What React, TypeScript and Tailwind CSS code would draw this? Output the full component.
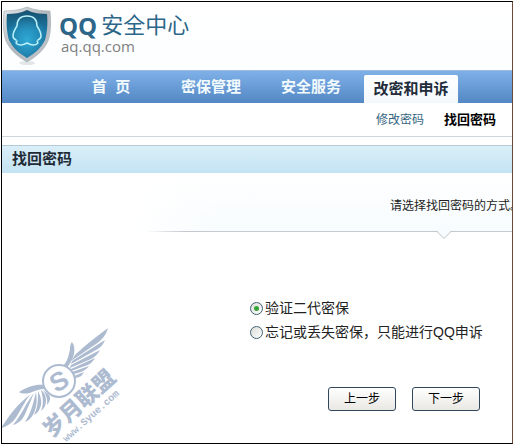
import React, { useState } from "react";

const navItems = [
  { label: "首\u00A0\u00A0页", href: "#home" },
  { label: "密保管理", href: "#manage" },
  { label: "安全服务", href: "#service" },
];

const methods = [
  { id: "mibao", label: "验证二代密保" },
  { id: "appeal", label: "忘记或丢失密保，只能进行QQ申诉" },
];

function ShieldLogo() {
  return (
    <svg width="50" height="62" viewBox="0 0 50 62" aria-hidden="true">
      <defs>
        <linearGradient id="rim" x1="0" y1="0" x2="1" y2="1">
          <stop offset="0" stopColor="#e4e7e9" />
          <stop offset="0.5" stopColor="#b0b6bc" />
          <stop offset="1" stopColor="#c4c9ce" />
        </linearGradient>
        <linearGradient id="face" x1="0" y1="0" x2="0" y2="1">
          <stop offset="0" stopColor="#17506f" />
          <stop offset="0.45" stopColor="#1c7aa6" />
          <stop offset="1" stopColor="#1a6c98" />
        </linearGradient>
        <radialGradient id="glow" cx="0.5" cy="0.62" r="0.5">
          <stop offset="0" stopColor="#2fa9d6" />
          <stop offset="1" stopColor="#2fa9d6" stopOpacity="0" />
        </radialGradient>
      </defs>
      <ellipse cx="25" cy="57" rx="8" ry="2" fill="#e3e6e8" />
      <path d="M25 1C18 4 10 5 2 5c-1 11-1 22 2 30 4 9 11 15 21 21 10-6 17-12 21-21 3-8 3-19 2-30C40 5 32 4 25 1Z" fill="url(#rim)" stroke="#a0a7ae" strokeWidth="0.6" />
      <path d="M25 4C19 7 12 8 5 8c-1 10 0 19 2 26 4 8 10 13 18 18 8-5 14-10 18-18 2-7 3-16 2-26C38 8 31 7 25 4Z" fill="url(#face)" />
      <path d="M25 4C19 7 12 8 5 8c-1 10 0 19 2 26 4 8 10 13 18 18 8-5 14-10 18-18 2-7 3-16 2-26C38 8 31 7 25 4Z" fill="url(#glow)" />
      <g fill="none" stroke="#b9f1fb" strokeWidth="1.5" strokeLinecap="round" strokeLinejoin="round">
        <path d="M14 34c-2-1-3-2-3-4 0-4 2-7 4-10 0-7 4-10 10-10s10 3 10 10c2 3 4 6 4 10 0 2-1 3-3 4" />
        <path d="M15 35c-2 2 0 4 4 4 2 0 4-1 6-2 2 1 4 2 6 2 4 0 6-2 4-4" />
      </g>
    </svg>
  );
}

function WingMark() {
  return (
    <svg width="126" height="120" viewBox="2 325 126 120" className="pointer-events-none absolute bottom-0 left-0" aria-hidden="true">
      <g fill="#adbbd1">
        {/* upper wing */}
        <path d="M62 369c5-4 7-12 8-18 0-4 1-6 2-7 2 3 3 6 2 12-2 7-5 11-8 15z" />
        <path d="M75 357c9-9 21-18 33-27-2 7-6 12-12 16l-25 17z" />
        <path d="M72 363l25-16c3-2 6-4 8-5-2 5-5 8-9 10l-25 14z" />
        <path d="M71 367l29-15c-2 4-5 7-9 9l-21 9z" />
        <path d="M71 371l24-11c-3 5-6 7-10 8l-14 5z" />
        <path d="M72 374l17-6c-3 4-7 6-15 8z" />
        <path d="M74 378l10-4c-2 4-4 5-8 6z" />
        {/* lower wing */}
        <path d="M45 387c-9-1-16 1-26 7 3 2 9 2 13 0 5-2 9-3 12-3z" />
        <path d="M31 396C17 406 10 417 1 430c7-2 12-5 16-12 5-8 9-17 14-22z" />
        <path d="M34 395c-8 10-12 21-21 32 7-2 10-6 13-13z" />
        <path d="M36 394c-3 12-5 21-11 30 5-2 8-6 10-12 2-6 2-12 1-18z" />
        <path d="M38 393c0 9 0 16-4 24 4-2 6-6 7-10 1-5-1-10-3-14z" />
        <path d="M41 392c2 8 3 13 0 21 4-3 5-7 5-11 0-4-2-8-5-10z" />
        <path d="M43 392c3 5 5 9 4 15 3-3 4-7 2-10z" />
      </g>
      <circle cx="59" cy="383" r="16" fill="#ffffff" stroke="#adbbd1" strokeWidth="2" />
      <text x="59" y="392" textAnchor="middle" fontSize="26" transform="rotate(-30 59 383)" className="fill-[#adbbd1] font-['Liberation_Sans',sans-serif] font-bold">
        S
      </text>
      <text x="79" y="413" textAnchor="middle" fontSize="22" transform="rotate(-42 79 405)" className="fill-[#adbbd1] font-['Noto_Sans_CJK_SC',sans-serif] font-black">
        岁月联盟
      </text>
      <text x="91" y="421" textAnchor="middle" fontSize="10" transform="rotate(-42 91 418)" className="fill-[#adbbd1] font-['Liberation_Mono',monospace] font-bold">
        www.Syue.com
      </text>
    </svg>
  );
}

export default function App() {
  const [method, setMethod] = useState("mibao");

  const buttonClass =
    "h-6 w-[68px] rounded-[3px] border border-[#33475a] bg-linear-to-b from-white to-[#e9e8e3] text-xs text-black";

  return (
    <div className="min-h-screen bg-white p-px pb-0.5 font-['Liberation_Sans','Noto_Sans_CJK_SC',sans-serif] text-[#222]">
      <div className="relative flex min-h-[calc(100vh-3px)] flex-col overflow-hidden border border-black border-r-[#6b4a3c]">
        <header className="flex h-[68px] shrink-0 items-start gap-[7px] bg-linear-to-b from-white to-[#fcfeff] pt-1">
          <ShieldLogo />
          <div className="flex flex-col pt-2">
            <div className="flex items-center gap-1 text-[#2c6688]">
              <span className="font-['Open_Sans',sans-serif] text-2xl leading-6 font-bold">QQ</span>
              <span className="text-[22px] leading-6">安全中心</span>
            </div>
            <span className="pl-0.5 font-['Open_Sans',sans-serif] text-[15px] leading-4 text-[#808080]">aq.qq.com</span>
          </div>
        </header>

        <nav className="flex h-[33px] shrink-0 items-end border-t border-[#9dbbdc] bg-linear-to-b from-[#7fb0e8] to-[#5388c4] pl-[59px] text-[15px] font-bold whitespace-nowrap text-[#f2fafd]">
          {navItems.map((item) => (
            <a key={item.label} href={item.href} className="flex h-full w-[100px] items-center justify-center">
              {item.label}
            </a>
          ))}
          <a href="#password" className="ml-[3px] flex h-7 w-[94px] items-center justify-center rounded-t-xs bg-linear-to-b from-white to-[#f3f8fc] text-[#222c3a]">
            改密和申诉
          </a>
        </nav>

        <div className="shrink-0 pb-2">
          <div className="flex h-[34px] items-center gap-5 border-b border-[#d0d7dc] pl-[374px] whitespace-nowrap">
            <a href="#change" className="text-xs text-[#35647f]">修改密码</a>
            <a href="#find" className="text-[13px] font-bold text-black">找回密码</a>
          </div>
        </div>

        <h1 className="flex h-7 shrink-0 items-center border-t border-[#b5cbd6] bg-linear-to-b from-[#daeff8] to-[#c4e3f3] pl-2.5 text-[15px] font-bold text-[#1f2c38]">
          找回密码
        </h1>

        <section className="relative flex h-[59px] shrink-0 items-center bg-linear-to-b from-white to-[#f7fcfe] pt-1.5 pl-[388px]">
          <p className="text-xs whitespace-nowrap">请选择找回密码的方式。</p>
          <div className="absolute inset-y-0 left-0 w-[220px] bg-linear-to-r from-white from-60% to-transparent" />
          <div className="absolute right-0 bottom-0 left-[145px] h-px bg-linear-to-r from-transparent to-[#c3c9cf] to-10%" />
          <svg width="16" height="9" viewBox="0 0 16 9" className="absolute top-[58px] left-[434px]" aria-hidden="true">
            <path d="M1 0h14L8 7z" fill="#f7fcfe" />
            <path d="M0 .5h1L8 7.5 15 .5h1" fill="none" stroke="#b9c0c8" />
          </svg>
        </section>

        <form className="flex flex-col pt-16 pl-[248px]" onSubmit={(e) => e.preventDefault()}>
          {methods.map((m) => (
            <label key={m.id} className="flex h-6 items-center gap-0.5 text-sm whitespace-nowrap">
              <input
                type="radio"
                name="method"
                value={m.id}
                checked={method === m.id}
                onChange={() => setMethod(m.id)}
                className="flex size-[13px] appearance-none items-center justify-center rounded-full border border-[#3f6272] bg-linear-to-br from-[#dcdcd7] to-white before:size-[5px] before:rounded-full before:content-[''] checked:before:bg-[#35a335]"
              />
              {m.label}
            </label>
          ))}
          <div className="flex gap-4 pt-[43px] pl-[78px]">
            <button type="button" className={buttonClass}>上一步</button>
            <button type="submit" className={buttonClass}>下一步</button>
          </div>
        </form>

        <WingMark />
      </div>
    </div>
  );
}
